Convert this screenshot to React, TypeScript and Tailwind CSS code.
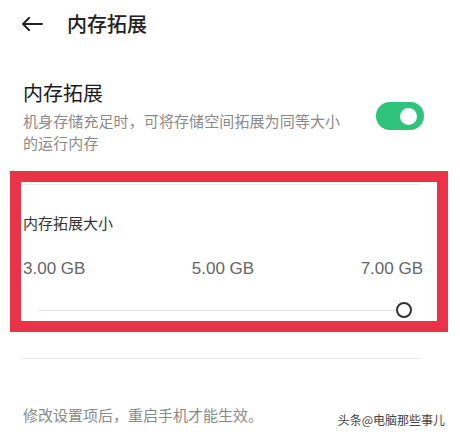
import React from "react";

const font = { fontFamily: '"Noto Sans CJK SC", "Noto Sans", sans-serif' };

export default function App() {
  return (
    <div className="w-[460px] h-[438px] bg-white overflow-hidden relative" style={font}>
      {/* Header */}
      <div className="h-[48px] flex items-center pl-[21px]">
        <svg width="22" height="14" viewBox="0 0 22 14" fill="none" className="shrink-0">
          <path d="M21 7H2M8 1L2 7L8 13" stroke="#222" strokeWidth="2" strokeLinecap="round" strokeLinejoin="round" />
        </svg>
        <span className="ml-[24px] text-[20px] leading-[28px] font-medium text-[#222]">内存拓展</span>
      </div>

      {/* Toggle section */}
      <div className="mt-[31px] px-[23px] flex justify-between">
        <div className="w-[330px]">
          <div className="text-[20px] leading-[28px] text-[#1a1a1a]">内存拓展</div>
          <div className="mt-[3px] text-[15px] leading-[22px] text-[#8a8a8a] tracking-[0.1px]">
            机身存储充足时，可将存储空间拓展为同等大小的运行内存
          </div>
        </div>
        <div className="mt-[23px] mr-[13px] w-[48px] h-[28px] rounded-full bg-[#2fc37c] flex items-center justify-end pr-[7px] shrink-0">
          <div className="w-[17px] h-[17px] rounded-full bg-white" />
        </div>
      </div>

      {/* Red highlight box */}
      <div className="mt-[17px] mx-[10px] w-[438px] h-[161px] border-[11px] border-[#ea3349]">
        <div className="mt-[2px] h-px bg-[#ececec] mr-[16px]" />
        <div className="mt-[28px] pl-[2px] text-[15px] leading-[20px] text-[#333]">内存拓展大小</div>
        <div
          className="mt-[25px] pl-[2px] pr-[14px] flex justify-between text-[17px] leading-[22px] text-[#666]"
          style={{ fontFamily: '"Liberation Sans", Arial, sans-serif' }}
        >
          <span>3.00 GB</span>
          <span>5.00 GB</span>
          <span>7.00 GB</span>
        </div>
        <div className="mt-[22px] ml-[17px] mr-[24px] relative h-[16px] flex items-center">
          <div className="flex-1 h-px bg-[#e6e6e6]" />
          <div className="absolute right-[1px] top-0 w-[16px] h-[16px] rounded-full border-[2.5px] border-[#333] bg-white" />
        </div>
      </div>

      {/* Divider */}
      <div className="mt-[26px] mx-[22px] h-px bg-[#ededed] w-[400px]" />

      {/* Footer text */}
      <div className="mt-[43px] px-[23px]">
        <span className="text-[15px] leading-[22px] text-[#8a8a8a]">修改设置项后，重启手机才能生效。</span>
      </div>

      {/* Watermark overlay */}
      <span className="absolute right-[15px] bottom-[10px] text-[12px] leading-[16px] text-[#444]">头条@电脑那些事儿</span>
    </div>
  );
}
